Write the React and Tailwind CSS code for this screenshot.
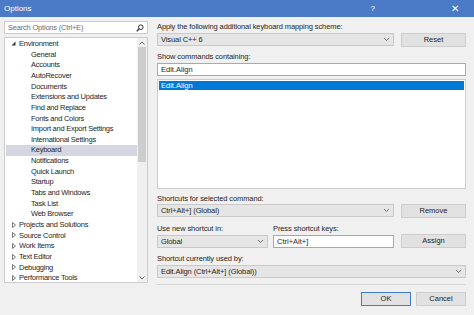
import React from 'react';

const FONT = { fontFamily: '"Liberation Sans", Arial, sans-serif' };

const ENV_CHILDREN = [
  'General', 'Accounts', 'AutoRecover', 'Documents', 'Extensions and Updates',
  'Find and Replace', 'Fonts and Colors', 'Import and Export Settings',
  'International Settings', 'Keyboard', 'Notifications', 'Quick Launch',
  'Startup', 'Tabs and Windows', 'Task List', 'Web Browser',
];
const TOP_NODES = ['Projects and Solutions', 'Source Control', 'Work Items', 'Text Editor', 'Debugging', 'Performance Tools'];

const Chevron = () => (
  <svg width="7" height="5" viewBox="0 0 7 5" className="shrink-0">
    <path d="M1 1 L3.5 3.5 L6 1" fill="none" stroke="#606060" strokeWidth="0.9" />
  </svg>
);

const Combo = ({ text, className = '' }) => (
  <div className={`h-[13px] flex items-center justify-between pl-[3px] pr-[3px] bg-[#e5e5e5] border border-[#c9c9c9] ${className}`}>
    <span className="text-[7.5px] text-[#1e1e1e] whitespace-nowrap leading-none tracking-[-0.1px]">{text}</span>
    <Chevron />
  </div>
);

const Btn = ({ label, primary = false, className = '' }) => (
  <div className={`h-[14px] flex items-center justify-center bg-[#e1e1e1] border ${primary ? 'border-[#3c7fd1]' : 'border-[#cdcdcd]'} text-[7.5px] text-[#1e1e1e] leading-none ${className}`}>
    {label}
  </div>
);

const Label = ({ children, className = '' }) => (
  <div className={`h-[10px] flex items-center text-[7.5px] text-[#1e1e1e] whitespace-nowrap leading-none tracking-[-0.1px] ${className}`}>{children}</div>
);

const TreeRow = ({ text, indent, arrow, selected }) => (
  <div className={`h-[10.65px] flex items-center whitespace-nowrap text-[7.5px] leading-none tracking-[-0.25px] text-[#262626] ${selected ? 'bg-[#d6d6e2]' : ''}`}>
    <div className="w-[13px] flex justify-end pr-[3px] shrink-0">
      {arrow === 'open' && (
        <svg width="5" height="5" viewBox="0 0 5 5"><path d="M4.5 0.5 L4.5 4.5 L0.5 4.5 Z" fill="#333" /></svg>
      )}
      {arrow === 'closed' && (
        <svg width="4" height="6" viewBox="0 0 4 6"><path d="M0.5 0.5 L3.5 3 L0.5 5.5 Z" fill="none" stroke="#555" strokeWidth="0.8" /></svg>
      )}
    </div>
    <span style={{ paddingLeft: indent }}>{text}</span>
  </div>
);

export default function App() {
  return (
    <div className="w-[474px] h-[315px] bg-[#f0f0f0] flex flex-col overflow-hidden" style={FONT}>
      {/* title bar */}
      <div className="h-[17px] bg-[#4b7bc7] flex items-center text-white shrink-0">
        <span className="pl-[4px] text-[8px] leading-none">Options</span>
        <div className="ml-auto flex items-center">
          <span className="text-[8px] leading-none mr-[76px]">?</span>
          <span className="text-[10px] leading-none mr-[15px]">✕</span>
        </div>
      </div>

      <div className="flex flex-1">
        {/* left pane */}
        <div className="w-[144px] ml-[4px] flex flex-col">
          <div className="mt-[4px] h-[13px] bg-white border border-[#cccccc] flex items-center justify-between pl-[3px] pr-[3px]">
            <span className="text-[7.5px] text-[#6d6d6d] leading-none whitespace-nowrap tracking-[-0.2px]">Search Options (Ctrl+E)</span>
            <svg width="8" height="8" viewBox="0 0 8 8">
              <circle cx="4.8" cy="3.2" r="2.3" fill="none" stroke="#333" strokeWidth="1" />
              <path d="M3.2 4.8 L0.8 7.2" stroke="#333" strokeWidth="1.3" />
            </svg>
          </div>
          <div className="mt-[3px] h-[246px] bg-white border border-[#cccccc] flex">
            <div className="flex-1 pt-[0.5px] pl-[1px] overflow-hidden">
              <TreeRow text="Environment" indent={0} arrow="open" />
              {ENV_CHILDREN.map((t) => (
                <TreeRow key={t} text={t} indent={12} selected={t === 'Keyboard'} />
              ))}
              {TOP_NODES.map((t) => (
                <TreeRow key={t} text={t} indent={0} arrow="closed" />
              ))}
            </div>
            {/* scrollbar */}
            <div className="w-[10px] bg-[#f0f0f0] flex flex-col items-center">
              <div className="h-[9px] flex items-center">
                <svg width="6" height="4" viewBox="0 0 6 4"><path d="M0.5 3.5 L3 1 L5.5 3.5" fill="none" stroke="#606060" strokeWidth="1" /></svg>
              </div>
              <div className="w-[8px] h-[115px] bg-[#cdcdcd]" />
              <div className="flex-1" />
              <div className="h-[9px] flex items-center">
                <svg width="6" height="4" viewBox="0 0 6 4"><path d="M0.5 0.5 L3 3 L5.5 0.5" fill="none" stroke="#606060" strokeWidth="1" /></svg>
              </div>
            </div>
          </div>
        </div>

        {/* right pane */}
        <div className="w-[309px] ml-[9px] flex flex-col">
          <Label className="mt-[5px]">Apply the following additional keyboard mapping scheme:</Label>
          <div className="flex gap-[7px] mt-[1px]">
            <Combo text="Visual C++ 6" className="w-[237px]" />
            <Btn label="Reset" className="flex-1" />
          </div>

          <Label className="mt-[5px]">Show commands containing:</Label>
          <div className="mt-[1px] h-[13px] bg-white border border-[#a9a9a9] flex items-center pl-[3px] text-[7.5px] leading-none text-[#1e1e1e]">Edit.Align</div>

          <div className="mt-[3px] h-[110px] bg-white border border-[#cccccc] p-[1px]">
            <div className="h-[9px] bg-[#0078d7] text-white text-[7.5px] leading-none flex items-center pl-[2px]">Edit.Align</div>
          </div>

          <Label className="mt-[5px]">Shortcuts for selected command:</Label>
          <div className="flex gap-[7px]">
            <Combo text="Ctrl+Alt+] (Global)" className="w-[237px]" />
            <Btn label="Remove" className="flex-1 h-[13px]" />
          </div>

          <div className="flex mt-[6px]">
            <div className="w-[111px] flex flex-col">
              <Label>Use new shortcut in:</Label>
              <Combo text="Global" className="mt-[1px]" />
            </div>
            <div className="w-[121px] ml-[5px] flex flex-col">
              <Label>Press shortcut keys:</Label>
              <div className="mt-[1px] h-[13px] bg-white border border-[#a9a9a9] flex items-center pl-[3px] text-[7.5px] leading-none text-[#1e1e1e]">Ctrl+Alt+]</div>
            </div>
            <div className="flex-1 ml-[7px] flex flex-col justify-end">
              <Btn label="Assign" className="h-[13px]" />
            </div>
          </div>

          <Label className="mt-[6px]">Shortcut currently used by:</Label>
          <Combo text="Edit.Align (Ctrl+Alt+] (Global))" className="mt-[1px]" />

          <div className="mt-[6px] h-px bg-[#d5d5d5]" />

          <div className="mt-[7px] flex justify-end gap-[5px]">
            <Btn label="OK" primary className="w-[50px]" />
            <Btn label="Cancel" className="w-[50px]" />
          </div>
        </div>
      </div>
    </div>
  );
}
